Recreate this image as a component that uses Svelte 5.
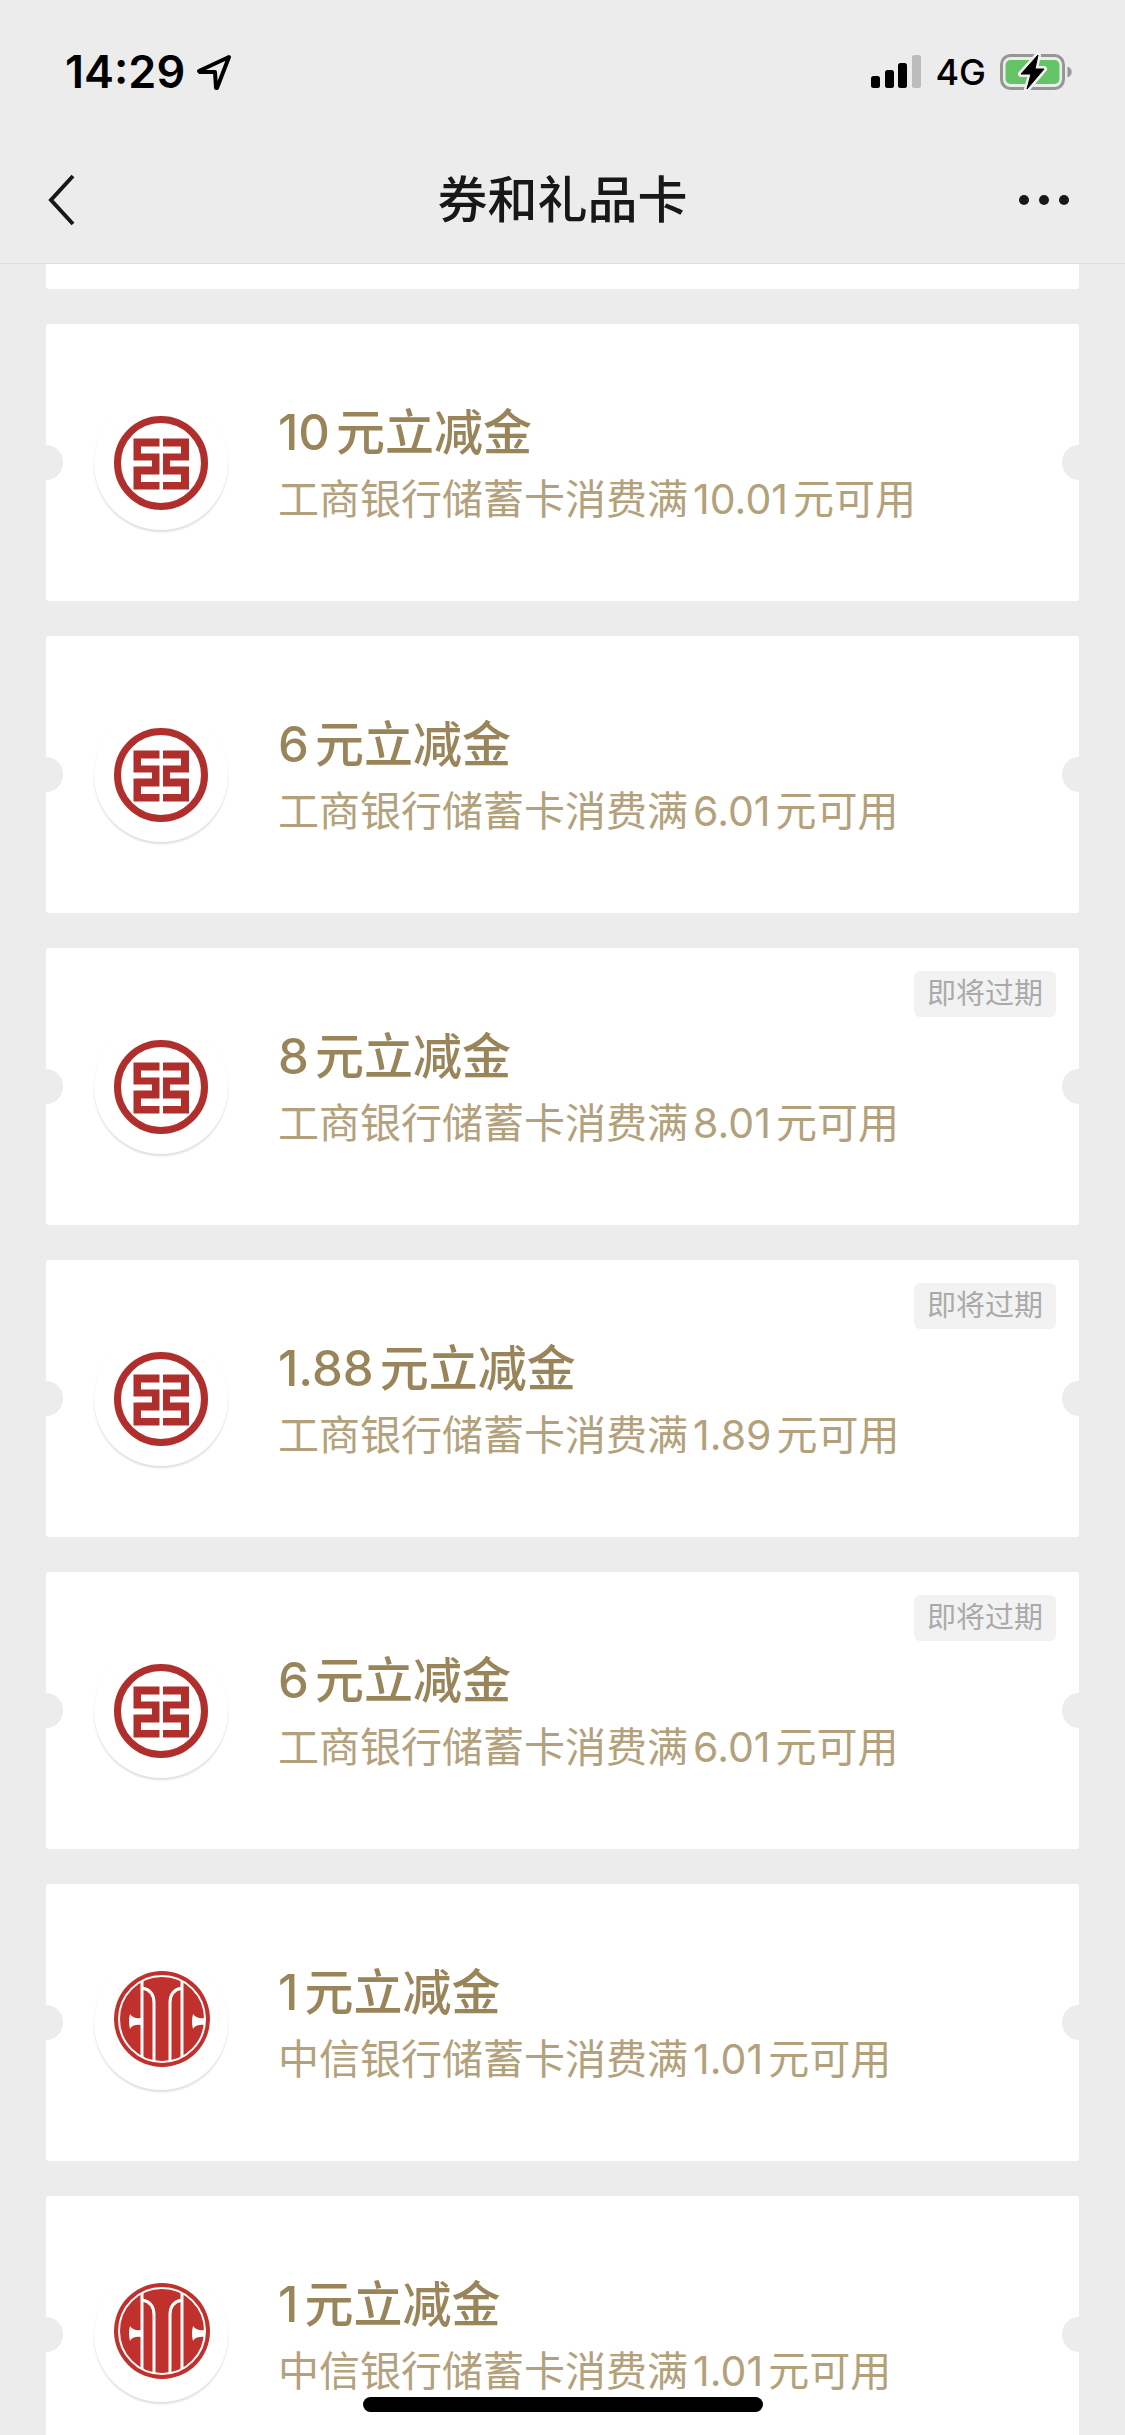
<script lang="ts">
	interface Coupon {
		bank: 'icbc' | 'citic';
		title: string;
		desc: string;
		expiring?: boolean;
	}

	const coupons: Coupon[] = [
		{ bank: 'icbc', title: '10元立减金', desc: '工商银行储蓄卡消费满10.01元可用' },
		{ bank: 'icbc', title: '6元立减金', desc: '工商银行储蓄卡消费满6.01元可用' },
		{ bank: 'icbc', title: '8元立减金', desc: '工商银行储蓄卡消费满8.01元可用', expiring: true },
		{ bank: 'icbc', title: '1.88元立减金', desc: '工商银行储蓄卡消费满1.89元可用', expiring: true },
		{ bank: 'icbc', title: '6元立减金', desc: '工商银行储蓄卡消费满6.01元可用', expiring: true },
		{ bank: 'citic', title: '1元立减金', desc: '中信银行储蓄卡消费满1.01元可用' },
		{ bank: 'citic', title: '1元立减金', desc: '中信银行储蓄卡消费满1.01元可用' }
	];
</script>

<div class="screen">
	<header>
		<div class="status">
			<div class="status-side">
				<span class="time">14:29</span>
				<svg width="36" height="36" viewBox="0 0 36 36" fill="none" stroke="#000" stroke-width="4" stroke-linejoin="round" aria-hidden="true">
					<path d="M33 3 L3 17 L4 18 H19 L20 34 L21 34 Z" />
				</svg>
			</div>
			<div class="status-side right">
				<svg width="50" height="34" viewBox="0 0 50 34" aria-hidden="true">
					<rect x="0" y="21" width="9" height="12" rx="2.5" />
					<rect x="14" y="15" width="9" height="18" rx="2.5" />
					<rect x="27" y="8" width="9" height="25" rx="2.5" />
					<rect x="41" y="0" width="9" height="33" rx="2.5" fill="#bcbcbc" />
				</svg>
				<span class="network">4G</span>
				<svg width="72" height="36" viewBox="0 0 72 36" aria-hidden="true">
					<rect x="1.5" y="1.5" width="62" height="33" rx="9" fill="none" stroke="#969696" stroke-width="3" />
					<rect x="5.5" y="6" width="54" height="24" rx="5" fill="#65c466" />
					<path d="M67.5 12.5 C73 14.5 73 21.5 67.5 23.5 Z" fill="#969696" />
					<path d="M38 1 L21 20 H31 L27 35 L44 15 H35 Z" stroke="#f0f0f0" stroke-width="6" stroke-linejoin="round" />
					<path d="M38 1 L21 20 H31 L27 35 L44 15 H35 Z" stroke="#000" stroke-width="1" stroke-linejoin="round" />
				</svg>
			</div>
		</div>
		<nav>
			<button class="icon-button" aria-label="返回">
				<svg width="27" height="52" viewBox="0 0 27 52" fill="none" stroke="#181818" stroke-width="4" aria-hidden="true">
					<path d="M25 2 L3 26 L25 50" />
				</svg>
			</button>
			<h1>券和礼品卡</h1>
			<button class="icon-button end" aria-label="更多">
				<svg width="58" height="12" viewBox="0 0 58 12" fill="#181818" aria-hidden="true">
					<circle cx="5" cy="6" r="5" />
					<circle cx="25" cy="6" r="5" />
					<circle cx="45" cy="6" r="5" />
				</svg>
			</button>
		</nav>
	</header>

	<main>
		<div class="previous"></div>
		{#each coupons as coupon}
			<article class="coupon">
				<div class="logo">
					{#if coupon.bank === 'icbc'}
						<svg width="98" height="98" viewBox="0 0 98 98" aria-hidden="true">
							<circle cx="49" cy="49" r="43.5" fill="none" stroke="#b02e2b" stroke-width="7" />
							<path fill="#b02e2b" d="M21.5 24.5 H47.5 V32.5 H29 V39.5 H47.5 V60.5 H29 V68 H47.5 V75.5 H21.5 V52.5 H40 V46.5 H21.5 Z M51 24.5 H77 V46.5 H58 V52.5 H77 V75.5 H51 V68 H69 V60.5 H51 V39.5 H69 V32.5 H51 Z" />
						</svg>
					{:else}
						<svg width="98" height="98" viewBox="0 0 98 98" aria-hidden="true">
							<g transform="translate(1 -4)">
								<circle cx="49" cy="49" r="48" fill="#c0302c" />
								<g fill="none" stroke="#fff" stroke-width="3">
									<circle cx="49" cy="49" r="43" stroke-width="2" />
									<path d="M29 11 V87 M69 11 V87" />
									<path d="M29 18 Q41 20 41 33 V91 M69 18 Q57 20 57 33 V91" />
								</g>
								<path fill="#fff" d="M17 44 Q20 49 28 48 V55 Q20 54 17 59 Q15 51.5 17 44 Z M80 44 Q83 49 92 48 V55 Q83 54 80 59 Q78 51.5 80 44 Z" />
							</g>
						</svg>
					{/if}
				</div>
				<div class="info">
					<h2>{coupon.title}</h2>
					<p>{coupon.desc}</p>
				</div>
				{#if coupon.expiring}
					<span class="tag">即将过期</span>
				{/if}
			</article>
		{/each}
	</main>
	<div class="home-indicator"></div>
</div>

<style>
	:global(body) {
		background: #ececec;
	}

	.screen {
		height: 100vh;
		display: flex;
		flex-direction: column;
		overflow: hidden;
		background: #ececec;
		font-family: Inter, 'Noto Sans CJK SC', sans-serif;
		text-autospace: normal;
	}

	svg {
		overflow: visible;
	}

	header {
		flex: none;
		border-bottom: 1px solid #dcdcdc;
	}

	.status {
		display: flex;
		justify-content: space-between;
		align-items: center;
		height: 144px;
		padding: 0 53px 0 65px;
	}

	.status-side {
		display: flex;
		align-items: center;
		gap: 11px;
	}

	.status-side.right {
		gap: 14px;
	}

	.time {
		font-size: 45px;
		font-weight: 600;
		line-height: 54px;
	}

	.network {
		font-size: 36px;
		font-weight: 500;
		line-height: 44px;
	}

	nav {
		display: grid;
		grid-template-columns: 1fr auto 1fr;
		align-items: center;
		height: 119px;
		padding: 0 48px 8px;
		box-sizing: border-box;
	}

	h1 {
		margin: 0;
		font-size: 50px;
		font-weight: 500;
		line-height: 72px;
		color: #181818;
	}

	.icon-button {
		display: flex;
		justify-self: start;
		padding: 0;
		border: 0;
		background: none;
		cursor: pointer;
	}

	.icon-button.end {
		justify-self: end;
	}

	main {
		flex: 1;
		min-height: 0;
		display: flex;
		flex-direction: column;
		gap: 35px;
		padding: 0 46px;
		overflow: hidden;
	}

	.previous {
		flex: none;
		height: 25px;
		border-radius: 0 0 3px 3px;
		background: #fff;
	}

	.coupon {
		position: relative;
		flex: none;
		display: flex;
		align-items: center;
		gap: 50px;
		height: 277px;
		padding-left: 48px;
		box-sizing: border-box;
		border-radius: 3px;
		background: #fff;
	}

	/* half-round cut-outs on both edges */
	.coupon::before,
	.coupon::after {
		content: '';
		position: absolute;
		top: 121px;
		width: 17px;
		height: 35px;
		background: #ececec;
	}

	.coupon::before {
		left: 0;
		border-radius: 0 18px 18px 0;
	}

	.coupon::after {
		right: 0;
		border-radius: 18px 0 0 18px;
	}

	.logo {
		display: flex;
		align-items: center;
		justify-content: center;
		width: 134px;
		height: 134px;
		border-radius: 50%;
		box-shadow: 0 2px 2px #dedede;
	}

	h2 {
		margin: 0;
		font-size: 49px;
		font-weight: 500;
		line-height: 72px;
		color: #9a855a;
	}

	p {
		margin: 0;
		font-size: 41px;
		line-height: 60px;
		color: #b3a17b;
	}

	.tag {
		position: absolute;
		top: 23px;
		right: 23px;
		padding: 0 13px;
		border-radius: 6px;
		background: #f2f2f2;
		font-size: 29px;
		line-height: 46px;
		color: #aaa;
	}

	.home-indicator {
		position: fixed;
		left: 50%;
		bottom: 23px;
		width: 400px;
		height: 15px;
		border-radius: 8px;
		background: #000;
		transform: translateX(-50%);
	}
</style>
